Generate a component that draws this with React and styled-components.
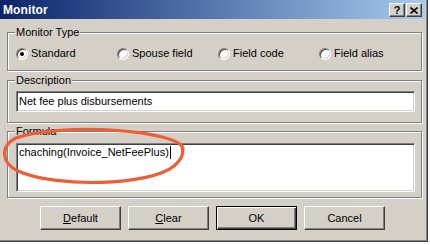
import React from 'react';
import styled, { createGlobalStyle } from 'styled-components';

const GlobalStyle = createGlobalStyle`
  html, body {
    margin: 0;
    padding: 0;
    background: #ffffff;
  }
  body {
    font-family: "Liberation Sans", Arial, sans-serif;
    font-size: 11px;
    color: #000;
  }
`;

const Window = styled.div`
  position: relative;
  width: 428px;
  height: 242px;
  box-sizing: border-box;
  display: flex;
  flex-direction: column;
  background: #d4d0c8;
  border-right: 1px solid #404040;
  border-bottom: 1px solid #404040;
  box-shadow: inset -1px -1px 0 #808080;
  padding: 0 2px 2px 0;
`;

const TitleBar = styled.div`
  height: 19px;
  display: flex;
  align-items: center;
  padding: 0 3px;
  background: linear-gradient(to right, #0a246a, #a6caf0);
`;

const Title = styled.span`
  color: #fff;
  font-weight: bold;
  font-size: 12px;
  letter-spacing: 0.1px;
`;

const CaptionButtons = styled.div`
  margin-left: auto;
  display: flex;
  gap: 1px;
  margin-top: 1px;
`;

const CaptionButton = styled.div`
  width: 16px;
  height: 14px;
  box-sizing: border-box;
  display: flex;
  align-items: center;
  justify-content: center;
  background: #d4d0c8;
  border: 1px solid;
  border-color: #fff #404040 #404040 #fff;
  box-shadow: inset -1px -1px 0 #808080;
  font-weight: bold;
  font-size: 11px;
  line-height: 1;
`;

const Body = styled.div`
  flex: 1;
  display: flex;
  flex-direction: column;
  padding: 13px 3px 0 7px;
`;

const GroupBox = styled.div`
  display: flex;
  flex-direction: column;
  margin-top: ${(p) => p.$gap || 0}px;
  padding: 0 6px ${(p) => p.$bottom || 10}px 8px;
  border: 1px solid #808080;
  box-shadow: inset 1px 1px 0 #fff, 1px 1px 0 #fff;
`;

const Caption = styled.span`
  align-self: flex-start;
  margin: -7px 0 0 -1px;
  padding: 0 1px;
  line-height: 13px;
  background: #d4d0c8;
`;

const RadioRow = styled.div`
  display: grid;
  grid-template-columns: repeat(4, 101px);
  margin-top: 8px;
  height: 13px;
`;

const RadioOption = styled.label`
  display: flex;
  align-items: center;
  gap: 3px;
  line-height: 13px;
`;

const RadioMark = styled.span`
  width: 12px;
  height: 12px;
  box-sizing: border-box;
  border-radius: 50%;
  display: flex;
  align-items: center;
  justify-content: center;
  background: #fff;
  border: 1px solid;
  border-color: #808080 #fff #fff #808080;
  box-shadow: inset 1px 1px 0 #404040, inset -1px -1px 0 #d4d0c8;
`;

const RadioDot = styled.span`
  width: 4px;
  height: 4px;
  border-radius: 50%;
  background: #000;
`;

const Field = styled.div`
  height: ${(p) => (p.$tall ? 49 : 21)}px;
  margin-top: ${(p) => (p.$tall ? 5 : 4)}px;
  box-sizing: border-box;
  display: flex;
  align-items: ${(p) => (p.$tall ? 'flex-start' : 'center')};
  padding: ${(p) => (p.$tall ? '2px 2px 0' : '0 2px')};
  background: #fff;
  border: 1px solid;
  border-color: #808080 #fff #fff #808080;
  box-shadow: inset 1px 1px 0 #404040, inset -1px -1px 0 #d4d0c8;
  line-height: 13px;
  white-space: nowrap;
`;

const Caret = styled.span`
  display: inline-block;
  width: 1px;
  height: 13px;
  margin-left: 1px;
  background: #000;
`;

const ButtonRow = styled.div`
  display: flex;
  gap: 7px;
  margin-top: 8px;
  padding-left: 33px;
`;

const Button = styled.div`
  width: 81px;
  height: 24px;
  box-sizing: border-box;
  display: flex;
  align-items: center;
  justify-content: center;
  background: #d4d0c8;
  border: 1px solid;
  border-color: ${(p) => (p.$default ? '#000' : '#fff #404040 #404040 #fff')};
  box-shadow: ${(p) =>
    p.$default
      ? 'inset 1px 1px 0 #fff, inset -1px -1px 0 #404040, inset -2px -2px 0 #808080'
      : 'inset -1px -1px 0 #808080'};
`;

const Annotation = styled.svg`
  position: absolute;
  left: 0;
  top: 0;
  pointer-events: none;
`;

const radios = [
  { label: 'Standard', checked: true },
  { label: 'Spouse field' },
  { label: 'Field code' },
  { label: 'Field alias' },
];

const App = () => (
  <>
    <GlobalStyle />
    <Window>
      <TitleBar>
        <Title>Monitor</Title>
        <CaptionButtons>
          <CaptionButton>?</CaptionButton>
          <CaptionButton>
            <svg width="8" height="7" viewBox="0 0 8 7">
              <path d="M0.5 0.5 L7.5 6.5 M7.5 0.5 L0.5 6.5" stroke="#000" strokeWidth="1.6" />
            </svg>
          </CaptionButton>
        </CaptionButtons>
      </TitleBar>
      <Body>
        <GroupBox>
          <Caption>Monitor Type</Caption>
          <RadioRow>
            {radios.map((r) => (
              <RadioOption key={r.label}>
                <RadioMark>{r.checked && <RadioDot />}</RadioMark>
                {r.label}
              </RadioOption>
            ))}
          </RadioRow>
        </GroupBox>
        <GroupBox $gap={9}>
          <Caption>Description</Caption>
          <Field>Net fee plus disbursements</Field>
        </GroupBox>
        <GroupBox $gap={8} $bottom={5}>
          <Caption>Formula</Caption>
          <Field $tall>
            chaching(Invoice_NetFeePlus)
            <Caret />
          </Field>
        </GroupBox>
        <ButtonRow>
          <Button>
            <span><u>D</u>efault</span>
          </Button>
          <Button>
            <span><u>C</u>lear</span>
          </Button>
          <Button $default>OK</Button>
          <Button>Cancel</Button>
        </ButtonRow>
      </Body>
      <Annotation width="428" height="242" viewBox="0 0 428 242">
        <path
          d="M183 149 C181 130, 60 122, 16 138 C0 146, 1 163, 18 171 C55 188, 150 186, 174 166 C182 159, 184 154, 182 146"
          fill="none"
          stroke="#ee5d35"
          strokeWidth="3.2"
          strokeLinecap="round"
        />
      </Annotation>
    </Window>
  </>
);

export default App;
